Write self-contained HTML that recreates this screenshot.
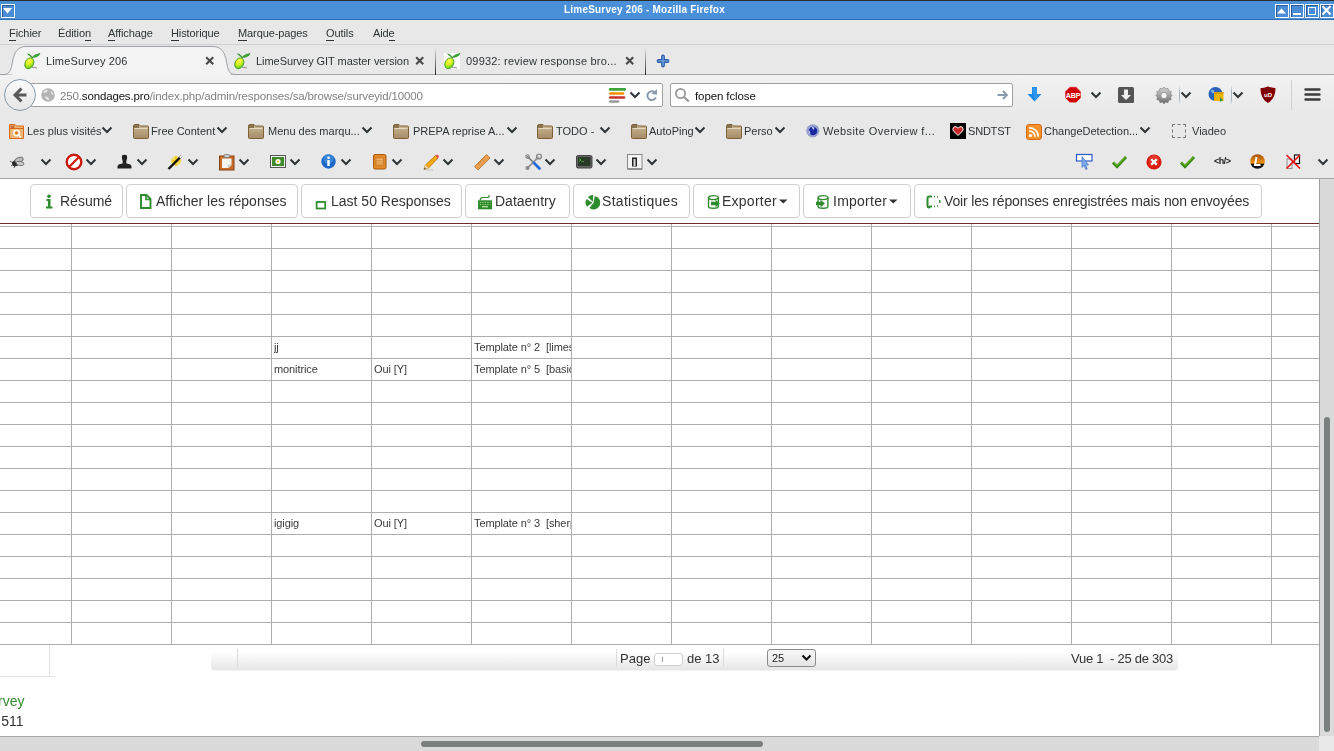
<!DOCTYPE html>
<html><head><meta charset="utf-8">
<style>
*{box-sizing:border-box}
html,body{margin:0;padding:0}
body{width:1334px;height:751px;overflow:hidden;position:relative;background:#e8e8e8;font-family:"Liberation Sans",sans-serif;color:#2e3436}
.a{position:absolute}
.t,.mi,.tab,.bm,.bt,.cell{will-change:transform}
.t{position:absolute;white-space:nowrap;line-height:1}
svg{position:absolute;overflow:visible}
.wb{position:absolute;top:3px;width:14px;height:14px;border:1px solid #fff;background:#4a8dd6;box-shadow:inset 1px 1px 0 #2a5a98}
.mi{position:absolute;top:28px;font-size:11px;letter-spacing:-0.1px;color:#2e3436;white-space:nowrap;line-height:1}
.mi u{text-decoration:none;position:relative}
.mi u:after{content:"";position:absolute;left:0;right:0;bottom:-2px;height:1px;background:#2e3436}
.tab{position:absolute;top:56px;font-size:11px;letter-spacing:-0.15px;color:#2e3436;white-space:nowrap;line-height:1}
.bm{position:absolute;top:126px;font-size:11px;letter-spacing:0px;color:#2e3436;white-space:nowrap;line-height:1}
.chev{position:absolute}
.btn{position:absolute;top:184px;height:34px;border:1px solid #cfcfcf;border-radius:4px;background:#fff}
.bt{position:absolute;top:194px;font-size:14px;color:#333;white-space:nowrap;line-height:1}
.hl{position:absolute;left:0;width:1319px;height:1px;background:#aeaeae}
.vl{position:absolute;top:224px;width:1px;height:421px;background:#aeaeae}
.cell{position:absolute;font-size:11px;letter-spacing:-0.1px;color:#3a3a3a;white-space:nowrap;line-height:1;overflow:hidden}
</style></head><body>

<!-- TITLE BAR -->
<div class="a" style="left:0;top:0;width:1334px;height:20px;background:#4a90d9;border-top:1px solid #2d2d2d;border-bottom:1px solid #2e6fb8">
  <div class="wb" style="left:1px;top:3px"><svg width="13" height="13" style="left:-1px;top:-1px"><path d="M2 4 H11 L6.5 9.5 Z" fill="#fff"/></svg></div>
  <div class="t" style="left:564px;top:4px;font-size:10px;letter-spacing:0.2px;font-weight:bold;color:#fff">LimeSurvey 206 - Mozilla Firefox</div>
  <div class="wb" style="left:1275px;top:3px"><svg width="13" height="13" style="left:-1px;top:-1px"><path d="M2 9.5 H11 L6.5 4.5 Z" fill="#fff"/></svg></div>
  <div class="wb" style="left:1290px;top:3px"><div class="a" style="left:2px;top:8px;width:8px;height:2px;background:#fff"></div></div>
  <div class="wb" style="left:1305px;top:3px"><div class="a" style="left:1.5px;top:1.5px;width:8px;height:8px;border:1.5px solid #fff"></div></div>
  <div class="wb" style="left:1320px;top:3px"><svg width="13" height="13" style="left:-1px;top:-1px"><path d="M2.5 2 L10.5 10.5 M10.5 2 L2.5 10.5" stroke="#fff" stroke-width="2"/></svg></div>
</div>

<!-- MENU BAR -->
<div class="a" style="left:0;top:20px;width:1334px;height:25px;border-bottom:1px solid #d0d0d0"></div>
<div class="mi" style="left:9px"><u>F</u>ichier</div>
<div class="mi" style="left:58px">Éditio<u>n</u></div>
<div class="mi" style="left:108px"><u>A</u>ffichage</div>
<div class="mi" style="left:171px"><u>H</u>istorique</div>
<div class="mi" style="left:238px"><u>M</u>arque-pages</div>
<div class="mi" style="left:326px"><u>O</u>utils</div>
<div class="mi" style="left:373px">Aid<u>e</u></div>

<!-- TABS -->
<div class="a" style="left:0;top:74px;width:1334px;height:1px;background:#a8a8a8"></div>
<svg width="240" height="32" style="left:0;top:45px">
  <path d="M0 29.5 L4 29.5 C9 29.5 11 26 12.5 17 C14 7 18 1.5 26 1.5 L213 1.5 C221 1.5 225 7 226.5 17 C228 26 230 29.5 235 29.5 L240 29.5" fill="#f3f3f3" stroke="#9aa0a6" stroke-width="1"/>
  <rect x="12" y="29" width="218" height="3" fill="#f3f3f3"/>
</svg>
<div class="a" style="left:435px;top:47px;width:1px;height:28px;background:linear-gradient(#e8e8e8,#222)"></div>
<div class="a" style="left:645px;top:47px;width:1px;height:28px;background:linear-gradient(#e8e8e8,#222)"></div>
<div class="tab" style="left:46px;letter-spacing:0.15px">LimeSurvey 206</div>
<div class="tab" style="left:256px;letter-spacing:-0.05px">LimeSurvey GIT master version</div>
<div class="tab" style="left:466px;letter-spacing:0.2px">09932: review response bro...</div>

<svg width="18" height="18" style="left:24px;top:52px">
<defs><radialGradient id="lm24" cx="0.35" cy="0.3" r="0.8"><stop offset="0" stop-color="#ffff50"/><stop offset="0.45" stop-color="#d8f020"/><stop offset="1" stop-color="#48c818"/></radialGradient></defs>
<path d="M8 15.5 Q11 15 13 16" stroke="#888" stroke-width="1.1" fill="none" opacity="0.8"/>
<ellipse cx="5.3" cy="11.3" rx="4.2" ry="5.7" transform="rotate(28 5.3 11.3)" fill="url(#lm24)" stroke="#2a8a10" stroke-width="0.7"/>
<path d="M8 5.5 C6.5 4.5 4.5 3 3.5 1.8 C5.5 2 7.5 3.5 8 5.5 Z" fill="#3ab030" stroke="#20801a" stroke-width="0.6"/>
<path d="M8 5.5 C10 3 13 2 16 1.5 C15 4 12 5.5 8 5.5 Z" fill="#3ab030" stroke="#20801a" stroke-width="0.6"/>
</svg>
<svg width="18" height="18" style="left:234px;top:52px">
<defs><radialGradient id="lm234" cx="0.35" cy="0.3" r="0.8"><stop offset="0" stop-color="#ffff50"/><stop offset="0.45" stop-color="#d8f020"/><stop offset="1" stop-color="#48c818"/></radialGradient></defs>
<path d="M8 15.5 Q11 15 13 16" stroke="#888" stroke-width="1.1" fill="none" opacity="0.8"/>
<ellipse cx="5.3" cy="11.3" rx="4.2" ry="5.7" transform="rotate(28 5.3 11.3)" fill="url(#lm234)" stroke="#2a8a10" stroke-width="0.7"/>
<path d="M8 5.5 C6.5 4.5 4.5 3 3.5 1.8 C5.5 2 7.5 3.5 8 5.5 Z" fill="#3ab030" stroke="#20801a" stroke-width="0.6"/>
<path d="M8 5.5 C10 3 13 2 16 1.5 C15 4 12 5.5 8 5.5 Z" fill="#3ab030" stroke="#20801a" stroke-width="0.6"/>
</svg>
<div class="a" style="left:444px;top:53px;width:16px;height:16px;background:#fff"></div><svg width="18" height="18" style="left:444px;top:52px">
<defs><radialGradient id="lm444" cx="0.35" cy="0.3" r="0.8"><stop offset="0" stop-color="#ffff50"/><stop offset="0.45" stop-color="#d8f020"/><stop offset="1" stop-color="#48c818"/></radialGradient></defs>
<path d="M8 15.5 Q11 15 13 16" stroke="#888" stroke-width="1.1" fill="none" opacity="0.8"/>
<ellipse cx="5.3" cy="11.3" rx="4.2" ry="5.7" transform="rotate(28 5.3 11.3)" fill="url(#lm444)" stroke="#2a8a10" stroke-width="0.7"/>
<path d="M8 5.5 C6.5 4.5 4.5 3 3.5 1.8 C5.5 2 7.5 3.5 8 5.5 Z" fill="#3ab030" stroke="#20801a" stroke-width="0.6"/>
<path d="M8 5.5 C10 3 13 2 16 1.5 C15 4 12 5.5 8 5.5 Z" fill="#3ab030" stroke="#20801a" stroke-width="0.6"/>
</svg>
<svg width="10" height="10" style="left:205px;top:56px"><path d="M1.2 1.2 L8.2 8.2 M8.2 1.2 L1.2 8.2" stroke="#4a4a4a" stroke-width="2.1"/></svg>
<svg width="10" height="10" style="left:415px;top:56px"><path d="M1.2 1.2 L8.2 8.2 M8.2 1.2 L1.2 8.2" stroke="#4a4a4a" stroke-width="2.1"/></svg>
<svg width="10" height="10" style="left:625px;top:56px"><path d="M1.2 1.2 L8.2 8.2 M8.2 1.2 L1.2 8.2" stroke="#4a4a4a" stroke-width="2.1"/></svg>
<svg width="14" height="14" style="left:657px;top:55px">
<path d="M6 1.5 V10.5 M1.5 6 H10.5" stroke="#2a5aa8" stroke-width="3.8" stroke-linecap="round"/>
<path d="M6 1.5 V10.5 M1.5 6 H10.5" stroke="#6a9ad8" stroke-width="1.6" stroke-linecap="round"/>
</svg>
<!-- NAV BAR -->
<div class="a" style="left:0;top:75px;width:1334px;height:40px;background:linear-gradient(#f2f2f2,#e8e8e8)"></div>
<div class="a" style="left:30px;top:83px;width:633px;height:24px;background:#fff;border:1px solid #a0a0a0;border-radius:2px"></div>
<div class="a" style="left:4px;top:79px;width:32px;height:32px;border-radius:50%;background:linear-gradient(#fafafa,#e6e6e6);border:1px solid #8a9aaa"></div>
<div class="t" style="left:60px;top:91px;font-size:11.5px;letter-spacing:-0.15px;color:#808080">250.<span style="color:#111">sondages.pro</span>/index.php/admin/responses/sa/browse/surveyid/10000</div>
<div class="a" style="left:670px;top:83px;width:343px;height:24px;background:#fff;border:1px solid #a0a0a0;border-radius:2px"></div>
<div class="t" style="left:695px;top:91px;font-size:11.5px;letter-spacing:-0.1px;color:#111">fopen fclose</div>


<!-- nav icons -->
<svg width="40" height="40" style="left:0;top:76px">
  <path d="M21.5 12.5 L15 19 L21.5 25.5 M15.5 19 L26.5 19" stroke="#5a5a5a" stroke-width="3" fill="none" stroke-linecap="butt" stroke-linejoin="miter"/>
</svg>
<svg width="16" height="16" style="left:41px;top:88px">
  <circle cx="7" cy="7" r="6.8" fill="#b4b4b4"/>
  <path d="M2.5 4 C4 2 6 1.5 7 2.5 C6 4 5 5 3 5 Z M9.5 3 C11 3.5 12.5 5 12.5 7 C11 7 10 5 9.5 3 Z M4 8.5 C6 8 8 9.5 8.5 12 C6.5 12.5 4.5 11 4 8.5 Z" fill="#e8e8e8"/>
</svg>
<svg width="20" height="20" style="left:607px;top:86px">
  <path d="M3.2 3.4 H17.8" stroke="#3ba53b" stroke-width="2.6" stroke-linecap="round"/>
  <path d="M3.2 7.5 H16" stroke="#f58e00" stroke-width="2.6" stroke-linecap="round"/>
  <path d="M3.2 11.5 H17" stroke="#c8302a" stroke-width="2.6" stroke-linecap="round"/>
  <path d="M3.2 15.5 H11" stroke="#999" stroke-width="2.6" stroke-linecap="round"/>
</svg>
<svg width="14" height="10" style="left:628px;top:90px">
  <path d="M2.5 2.5 L7 7 L11.5 2.5" stroke="#2e3436" stroke-width="2" fill="none"/>
</svg>
<svg width="16" height="16" style="left:644px;top:87px">
  <path d="M11.3 6 A4.4 4.4 0 1 0 11.8 10.5" stroke="#8a9aaa" stroke-width="2" fill="none"/>
  <path d="M13 2 L13 7.8 L7.5 7 Z" fill="#8a9aaa"/>
</svg>
<svg width="18" height="18" style="left:674px;top:86px">
  <circle cx="6.5" cy="7.5" r="4.6" stroke="#999" stroke-width="1.8" fill="none"/>
  <path d="M9.8 10.8 L14.8 15.5" stroke="#999" stroke-width="2.2"/>
</svg>
<svg width="14" height="14" style="left:996px;top:88px">
  <path d="M1.5 7 H11 M7 3 L11 7 L7 11" stroke="#8a9aaa" stroke-width="1.8" fill="none"/>
</svg>
<svg width="16" height="18" style="left:1027px;top:86px">
  <path d="M5 1 H10 V8 H14.5 L7.5 15.5 L0.5 8 H5 Z" fill="#1e88e5"/>
  <path d="M5.5 1.5 H9.5 V8.5 H13 L7.5 14.5 Z" fill="#42a5f5" opacity="0.5"/>
</svg>
<svg width="18" height="18" style="left:1065px;top:86px">
  <path d="M4.8 0.8 H11.2 L16 5.6 V12 L11.2 16.8 H4.8 L0 12 V5.6 Z" fill="#d40000" stroke="#f0f8f8" stroke-width="0.6"/>
  <text x="8" y="11.6" font-family="Liberation Sans" font-weight="bold" font-size="7.2" fill="#fff" text-anchor="middle" letter-spacing="-0.3">ABP</text>
</svg>
<svg width="14" height="10" style="left:1089px;top:90px">
  <path d="M2.5 2.5 L7 7 L11.5 2.5" stroke="#2e3436" stroke-width="2" fill="none"/>
</svg>
<svg width="18" height="18" style="left:1117px;top:86px">
  <rect x="1" y="1" width="16" height="16" rx="1.5" fill="#555"/>
  <path d="M7 3.5 H11 V9 H14 L9 14 L4 9 H7 Z" fill="#eee"/>
</svg>
<svg width="18" height="18" style="left:1155px;top:86px">
  <defs><linearGradient id="gg" x1="0" y1="0" x2="0" y2="1"><stop offset="0" stop-color="#d8d8d8"/><stop offset="1" stop-color="#6a6a6a"/></linearGradient></defs>
  <path d="M9 1 L10.5 3 L13 2.3 L13.7 4.8 L16.2 5.5 L15.5 8 L17.3 9.5 L15.5 11 L16.2 13.5 L13.7 14.2 L13 16.7 L10.5 16 L9 18 L7.5 16 L5 16.7 L4.3 14.2 L1.8 13.5 L2.5 11 L0.7 9.5 L2.5 8 L1.8 5.5 L4.3 4.8 L5 2.3 L7.5 3 Z" fill="url(#gg)" stroke="#666" stroke-width="0.5"/>
  <circle cx="9" cy="9.5" r="3.2" fill="#f4f4f4" stroke="#888" stroke-width="0.8"/>
</svg>
<div class="a" style="left:1179px;top:85px;width:1px;height:20px;background:linear-gradient(rgba(160,175,190,0),#a8b4c0 30%,#a8b4c0 70%,rgba(160,175,190,0))"></div>
<svg width="14" height="10" style="left:1179px;top:90px">
  <path d="M2.5 2.5 L7 7 L11.5 2.5" stroke="#2e3436" stroke-width="2" fill="none"/>
</svg>
<svg width="18" height="18" style="left:1208px;top:86px">
  <circle cx="7.5" cy="8" r="7" fill="#2a62b8"/>
  <path d="M3 4 C5 3 7 4 6 7 C4 8 3 6 3 4Z" fill="#7fb0e8"/>
  <rect x="6" y="6" width="9.5" height="9" fill="#f0b400"/>
  <rect x="6" y="6" width="9.5" height="2" fill="#d89a00"/>
  <path d="M12 11 L15 14 L12 16" fill="#3a9a3a"/>
</svg>
<div class="a" style="left:1231px;top:85px;width:1px;height:20px;background:linear-gradient(rgba(160,175,190,0),#a8b4c0 30%,#a8b4c0 70%,rgba(160,175,190,0))"></div>
<svg width="14" height="10" style="left:1231px;top:90px">
  <path d="M2.5 2.5 L7 7 L11.5 2.5" stroke="#2e3436" stroke-width="2" fill="none"/>
</svg>
<svg width="18" height="18" style="left:1260px;top:86px">
  <path d="M8 0.5 C11 1.5 13.5 2 15.5 2 C15.5 9 13 14 8 17 C3 14 0.5 9 0.5 2 C2.5 2 5 1.5 8 0.5Z" fill="#800000"/>
  <text x="8" y="11" font-family="Liberation Sans" font-weight="bold" font-size="6" fill="#fff" text-anchor="middle">uD</text>
</svg>
<div class="a" style="left:1291px;top:80px;width:1px;height:30px;background:#d0d0d0"></div>
<svg width="18" height="16" style="left:1304px;top:87px">
  <path d="M1.5 2.5 H15.5 M1.5 7.5 H15.5 M1.5 12.5 H15.5" stroke="#3c3c3c" stroke-width="2.4" stroke-linecap="round"/>
</svg>

<!-- BOOKMARKS -->
<div class="bm" style="left:27px">Les plus visités</div>
<div class="bm" style="left:151px">Free Content</div>
<div class="bm" style="left:268px">Menu des marqu...</div>
<div class="bm" style="left:413px">PREPA reprise A...</div>
<div class="bm" style="left:556px">TODO -</div>
<div class="bm" style="left:649px">AutoPing</div>
<div class="bm" style="left:744px">Perso</div>
<div class="bm" style="left:823px;letter-spacing:0.4px">Website Overview f...</div>
<div class="bm" style="left:968px;letter-spacing:-0.2px">SNDTST</div>
<div class="bm" style="left:1044px">ChangeDetection...</div>
<div class="bm" style="left:1192px">Viadeo</div>

<svg width="17" height="16" style="left:9px;top:124px">
<path d="M0.5 0.5 H6 L7.5 2 H14.5 V14.5 H0.5 Z" fill="#edb877" stroke="#dd6a12" stroke-width="1"/>
<rect x="1.5" y="1.5" width="4" height="2.5" fill="#c8733a"/>
<path d="M1 4.5 H14" stroke="#dd6a12" stroke-width="1"/>
<circle cx="7.5" cy="9" r="2.8" fill="none" stroke="#fff" stroke-width="1.3"/><circle cx="7.5" cy="9" r="1.2" fill="#dd6a12"/>
<path d="M9.5 11 L12 13.5" stroke="#fff" stroke-width="1.5"/></svg>
<svg width="14" height="10" style="left:100px;top:125px"><path d="M2.5 2.5 L7 7 L11.5 2.5" stroke="#2e3436" stroke-width="2" fill="none"/></svg>
<svg width="17" height="16" style="left:133px;top:124px"><defs><linearGradient id="fg133" x1="0" y1="0" x2="0" y2="1"><stop offset="0" stop-color="#cdb894"/><stop offset="1" stop-color="#a58c68"/></linearGradient></defs>
<path d="M0.5 2 Q0.5 0.5 2 0.5 H6 L7.5 2 H14.5 Q15.5 2 15.5 3 V13.5 Q15.5 14.5 14.5 14.5 H1.5 Q0.5 14.5 0.5 13.5 Z" fill="url(#fg133)" stroke="#7d6035" stroke-width="1"/>
<path d="M1.5 4.5 H14.5" stroke="#e6d8bc" stroke-width="1"/><rect x="1" y="1" width="5" height="3" fill="#8a7350"/></svg>
<svg width="14" height="10" style="left:215px;top:125px"><path d="M2.5 2.5 L7 7 L11.5 2.5" stroke="#2e3436" stroke-width="2" fill="none"/></svg>
<svg width="17" height="16" style="left:248px;top:124px"><defs><linearGradient id="fg248" x1="0" y1="0" x2="0" y2="1"><stop offset="0" stop-color="#cdb894"/><stop offset="1" stop-color="#a58c68"/></linearGradient></defs>
<path d="M0.5 2 Q0.5 0.5 2 0.5 H6 L7.5 2 H14.5 Q15.5 2 15.5 3 V13.5 Q15.5 14.5 14.5 14.5 H1.5 Q0.5 14.5 0.5 13.5 Z" fill="url(#fg248)" stroke="#7d6035" stroke-width="1"/>
<path d="M1.5 4.5 H14.5" stroke="#e6d8bc" stroke-width="1"/><rect x="1" y="1" width="5" height="3" fill="#8a7350"/></svg>
<svg width="14" height="10" style="left:360px;top:125px"><path d="M2.5 2.5 L7 7 L11.5 2.5" stroke="#2e3436" stroke-width="2" fill="none"/></svg>
<svg width="17" height="16" style="left:393px;top:124px"><defs><linearGradient id="fg393" x1="0" y1="0" x2="0" y2="1"><stop offset="0" stop-color="#cdb894"/><stop offset="1" stop-color="#a58c68"/></linearGradient></defs>
<path d="M0.5 2 Q0.5 0.5 2 0.5 H6 L7.5 2 H14.5 Q15.5 2 15.5 3 V13.5 Q15.5 14.5 14.5 14.5 H1.5 Q0.5 14.5 0.5 13.5 Z" fill="url(#fg393)" stroke="#7d6035" stroke-width="1"/>
<path d="M1.5 4.5 H14.5" stroke="#e6d8bc" stroke-width="1"/><rect x="1" y="1" width="5" height="3" fill="#8a7350"/></svg>
<svg width="14" height="10" style="left:505px;top:125px"><path d="M2.5 2.5 L7 7 L11.5 2.5" stroke="#2e3436" stroke-width="2" fill="none"/></svg>
<svg width="17" height="16" style="left:537px;top:124px"><defs><linearGradient id="fg537" x1="0" y1="0" x2="0" y2="1"><stop offset="0" stop-color="#cdb894"/><stop offset="1" stop-color="#a58c68"/></linearGradient></defs>
<path d="M0.5 2 Q0.5 0.5 2 0.5 H6 L7.5 2 H14.5 Q15.5 2 15.5 3 V13.5 Q15.5 14.5 14.5 14.5 H1.5 Q0.5 14.5 0.5 13.5 Z" fill="url(#fg537)" stroke="#7d6035" stroke-width="1"/>
<path d="M1.5 4.5 H14.5" stroke="#e6d8bc" stroke-width="1"/><rect x="1" y="1" width="5" height="3" fill="#8a7350"/></svg>
<svg width="14" height="10" style="left:598px;top:125px"><path d="M2.5 2.5 L7 7 L11.5 2.5" stroke="#2e3436" stroke-width="2" fill="none"/></svg>
<svg width="17" height="16" style="left:631px;top:124px"><defs><linearGradient id="fg631" x1="0" y1="0" x2="0" y2="1"><stop offset="0" stop-color="#cdb894"/><stop offset="1" stop-color="#a58c68"/></linearGradient></defs>
<path d="M0.5 2 Q0.5 0.5 2 0.5 H6 L7.5 2 H14.5 Q15.5 2 15.5 3 V13.5 Q15.5 14.5 14.5 14.5 H1.5 Q0.5 14.5 0.5 13.5 Z" fill="url(#fg631)" stroke="#7d6035" stroke-width="1"/>
<path d="M1.5 4.5 H14.5" stroke="#e6d8bc" stroke-width="1"/><rect x="1" y="1" width="5" height="3" fill="#8a7350"/></svg>
<svg width="14" height="10" style="left:693px;top:125px"><path d="M2.5 2.5 L7 7 L11.5 2.5" stroke="#2e3436" stroke-width="2" fill="none"/></svg>
<svg width="17" height="16" style="left:726px;top:124px"><defs><linearGradient id="fg726" x1="0" y1="0" x2="0" y2="1"><stop offset="0" stop-color="#cdb894"/><stop offset="1" stop-color="#a58c68"/></linearGradient></defs>
<path d="M0.5 2 Q0.5 0.5 2 0.5 H6 L7.5 2 H14.5 Q15.5 2 15.5 3 V13.5 Q15.5 14.5 14.5 14.5 H1.5 Q0.5 14.5 0.5 13.5 Z" fill="url(#fg726)" stroke="#7d6035" stroke-width="1"/>
<path d="M1.5 4.5 H14.5" stroke="#e6d8bc" stroke-width="1"/><rect x="1" y="1" width="5" height="3" fill="#8a7350"/></svg>
<svg width="14" height="10" style="left:773px;top:125px"><path d="M2.5 2.5 L7 7 L11.5 2.5" stroke="#2e3436" stroke-width="2" fill="none"/></svg>
<svg width="16" height="16" style="left:806px;top:124px">
<circle cx="6.8" cy="6.8" r="6.3" fill="#9aa0d8"/><circle cx="7" cy="7" r="4.3" fill="#1a2aa0"/><path d="M5.5 3 L8.5 3.5 L7.5 6 Z" fill="#d8dcf8"/><path d="M3 6 L4.5 9 L2.5 10 Z" fill="#c8d0f0"/>
<circle cx="6.8" cy="6.8" r="6.3" fill="none" stroke="#8a8aa0" stroke-width="0.8" stroke-dasharray="1 1"/></svg>
<svg width="17" height="17" style="left:950px;top:123px">
<rect x="0" y="0" width="16" height="16" fill="#000"/>
<path d="M8 12.5 L3.5 8 Q2.2 6.5 3.5 4.5 Q5 3 6.5 4 L8 5.2 L9.5 4 Q11 3 12.5 4.5 Q13.8 6.5 12.5 8 Z" fill="#c82828" stroke="#fff" stroke-width="1"/></svg>
<svg width="17" height="16" style="left:1026px;top:124px">
<rect x="0.5" y="0.5" width="15" height="15" rx="2.5" fill="#f5902a" stroke="#d86a10"/>
<circle cx="4.5" cy="11.5" r="1.6" fill="#fff"/>
<path d="M3.2 7.2 A5 5 0 0 1 8.8 12.8 M3.2 3.8 A8.5 8.5 0 0 1 12.2 12.8" stroke="#fff" stroke-width="1.7" fill="none"/></svg>
<svg width="14" height="10" style="left:1138px;top:125px"><path d="M2.5 2.5 L7 7 L11.5 2.5" stroke="#2e3436" stroke-width="2" fill="none"/></svg>
<div class="a" style="left:1172px;top:124px;width:14px;height:14px;border:1px dashed #777;border-radius:1px"></div>

<!-- ADDON BAR -->
<svg width="17" height="14" style="left:9px;top:155px">
<ellipse cx="7" cy="8" rx="4" ry="3" fill="#222" transform="rotate(-25 7 8)"/>
<ellipse cx="10" cy="5" rx="4.5" ry="2.5" fill="#bbb" stroke="#555" stroke-width="0.7" transform="rotate(-20 10 5)"/>
<ellipse cx="11" cy="8.5" rx="4" ry="2" fill="#ccc" stroke="#555" stroke-width="0.7" transform="rotate(10 11 8.5)"/>
<path d="M1 6 L4 8 M2 11 L5 9 M5 13 L6 10" stroke="#333" stroke-width="0.8"/></svg>
<svg width="14" height="10" style="left:39px;top:157px"><path d="M2.5 2.5 L7 7 L11.5 2.5" stroke="#2e3436" stroke-width="2" fill="none"/></svg>
<svg width="17" height="17" style="left:66px;top:154px">
<circle cx="8" cy="8" r="7.2" fill="#fff" stroke="#d8180c" stroke-width="2.2"/><path d="M3.3 12.7 L12.7 3.3" stroke="#d8180c" stroke-width="2.2"/>
<circle cx="8" cy="8" r="8" fill="none" stroke="#a81008" stroke-width="0.6"/></svg>
<svg width="14" height="10" style="left:84px;top:157px"><path d="M2.5 2.5 L7 7 L11.5 2.5" stroke="#2e3436" stroke-width="2" fill="none"/></svg>
<svg width="16" height="16" style="left:117px;top:154px">
<path d="M5 1.5 Q7.5 0 10 1.5 Q10.5 4.5 9.5 6.5 Q9 8.5 9.5 9.5 Q14.5 10 14.5 12.5 V14.5 H0.5 V12.5 Q0.5 10 5.5 9.5 Q6 8.5 5.5 6.5 Q4.5 4.5 5 1.5 Z" fill="#222"/></svg>
<svg width="14" height="10" style="left:135px;top:157px"><path d="M2.5 2.5 L7 7 L11.5 2.5" stroke="#2e3436" stroke-width="2" fill="none"/></svg>
<svg width="17" height="17" style="left:167px;top:154px">
<circle cx="9" cy="7" r="5" fill="#f6d830" opacity="0.7"/><path d="M9 1 L10 6 L15 7 L10 8 L9 13 L8 8 L3 7 L8 6 Z" fill="#f0c000"/>
<path d="M1.5 15 L14.5 2" stroke="#111" stroke-width="2.4"/><path d="M12.8 3.7 L14.5 2" stroke="#fff" stroke-width="2"/></svg>
<svg width="14" height="10" style="left:186px;top:157px"><path d="M2.5 2.5 L7 7 L11.5 2.5" stroke="#2e3436" stroke-width="2" fill="none"/></svg>
<svg width="16" height="17" style="left:219px;top:154px">
<rect x="0.5" y="2" width="14.5" height="14" fill="#c86a28" stroke="#8a4212" stroke-width="1"/>
<path d="M3 4.5 H12.5 V11 L9.5 14 H3 Z" fill="#f4f4f0"/><path d="M9.5 14 V11 H12.5" fill="#ddd" stroke="#aaa" stroke-width="0.5"/>
<rect x="5" y="0.5" width="5.5" height="3" rx="1" fill="#ccc" stroke="#777" stroke-width="0.8"/></svg>
<svg width="14" height="10" style="left:237px;top:157px"><path d="M2.5 2.5 L7 7 L11.5 2.5" stroke="#2e3436" stroke-width="2" fill="none"/></svg>
<svg width="17" height="14" style="left:270px;top:155px">
<rect x="0.5" y="0.5" width="15" height="12" fill="#f0f0f0" stroke="#555" stroke-width="1"/>
<rect x="2" y="2" width="12" height="9" fill="#3f8a2a"/><circle cx="8" cy="6.5" r="2.6" fill="#fff"/><circle cx="8" cy="6.5" r="1.1" fill="#f0c020"/></svg>
<svg width="14" height="10" style="left:288px;top:157px"><path d="M2.5 2.5 L7 7 L11.5 2.5" stroke="#2e3436" stroke-width="2" fill="none"/></svg>
<svg width="16" height="16" style="left:321px;top:154px">
<circle cx="7.5" cy="7.5" r="7.2" fill="#1b68c8"/><circle cx="7.5" cy="5" r="5" fill="#5aa0e8" opacity="0.5"/>
<rect x="6.3" y="6" width="2.4" height="6" fill="#fff"/><circle cx="7.5" cy="3.8" r="1.3" fill="#fff"/></svg>
<svg width="14" height="10" style="left:339px;top:157px"><path d="M2.5 2.5 L7 7 L11.5 2.5" stroke="#2e3436" stroke-width="2" fill="none"/></svg>
<svg width="14" height="16" style="left:373px;top:154px">
<rect x="0.5" y="0.5" width="12.5" height="14.5" rx="1.5" fill="#e08a2a" stroke="#a85a10" stroke-width="1"/>
<rect x="3" y="4" width="7.5" height="7" fill="#f0b060" stroke="#b86a20" stroke-width="0.6"/><path d="M3 6.5 H10.5 M3 8.8 H10.5" stroke="#c07830" stroke-width="0.5"/></svg>
<svg width="14" height="10" style="left:390px;top:157px"><path d="M2.5 2.5 L7 7 L11.5 2.5" stroke="#2e3436" stroke-width="2" fill="none"/></svg>
<svg width="17" height="17" style="left:423px;top:154px">
<path d="M1 15.5 L2.5 11 L12.5 1.5 L15 4 L5.5 14 Z" fill="#f5a810" stroke="#b8700a" stroke-width="0.8"/>
<path d="M12.5 1.5 L15 4 L16 3 Q16 1.5 14.5 0.5 Z" fill="#e84858"/><path d="M1 15.5 L2.5 11 L5.5 14 Z" fill="#f0d8a8"/><path d="M1 15.5 L1.8 13.5 L3 14.8 Z" fill="#333"/>
<path d="M3 16 H10" stroke="#999" stroke-width="0.8" opacity="0.6"/></svg>
<svg width="14" height="10" style="left:441px;top:157px"><path d="M2.5 2.5 L7 7 L11.5 2.5" stroke="#2e3436" stroke-width="2" fill="none"/></svg>
<svg width="17" height="17" style="left:474px;top:154px">
<path d="M0.5 12.5 L12.5 0.5 L16 4 L4 16 Z" fill="#e8a050" stroke="#b87028" stroke-width="0.8"/>
<path d="M4 9 L5.5 10.5 M6 7 L7 8 M8 5 L9.5 6.5 M10 3 L11 4" stroke="#a86a28" stroke-width="0.6"/></svg>
<svg width="14" height="10" style="left:492px;top:157px"><path d="M2.5 2.5 L7 7 L11.5 2.5" stroke="#2e3436" stroke-width="2" fill="none"/></svg>
<svg width="17" height="17" style="left:525px;top:154px">
<path d="M2 2 L14 14" stroke="#777" stroke-width="1.6"/><circle cx="2.5" cy="2.5" r="1.8" fill="none" stroke="#777" stroke-width="1"/>
<path d="M13.5 3 L3 13.5" stroke="#999" stroke-width="1.8"/><circle cx="14" cy="2.5" r="2.4" fill="none" stroke="#888" stroke-width="1.4"/><circle cx="2.5" cy="14" r="2" fill="#888"/>
<path d="M9 9 L14.5 14.5" stroke="#2a6ad8" stroke-width="2.8" stroke-linecap="round"/></svg>
<svg width="14" height="10" style="left:543px;top:157px"><path d="M2.5 2.5 L7 7 L11.5 2.5" stroke="#2e3436" stroke-width="2" fill="none"/></svg>
<svg width="17" height="14" style="left:576px;top:155px">
<rect x="0.5" y="0.5" width="15.5" height="12.5" rx="1.5" fill="#666" stroke="#444" stroke-width="1"/>
<rect x="2" y="2" width="12.5" height="9" fill="#2a3a28"/><path d="M3 3.5 L5 5 L3 6.5" stroke="#5ad830" stroke-width="0.8" fill="none"/><path d="M5.5 6.5 H8" stroke="#5ad830" stroke-width="0.6"/></svg>
<svg width="14" height="10" style="left:594px;top:157px"><path d="M2.5 2.5 L7 7 L11.5 2.5" stroke="#2e3436" stroke-width="2" fill="none"/></svg>
<svg width="16" height="16" style="left:627px;top:154px">
<rect x="0.5" y="0.5" width="14.5" height="14.5" fill="#f4f4f4" stroke="#888" stroke-width="1"/>
<rect x="5" y="3.5" width="5" height="9" fill="#222"/><rect x="6.5" y="5" width="2" height="7" fill="#ddd"/><path d="M1 15 H15" stroke="#666"/></svg>
<svg width="14" height="10" style="left:645px;top:157px"><path d="M2.5 2.5 L7 7 L11.5 2.5" stroke="#2e3436" stroke-width="2" fill="none"/></svg>
<svg width="17" height="17" style="left:1076px;top:154px">
<rect x="0.5" y="0.5" width="15.5" height="6.5" fill="#fff" stroke="#2a5ac8" stroke-width="1.2"/>
<path d="M6 2.5 L6 13.5 L8 11.5 L9.8 15.5 L11.3 14.8 L9.5 11 L12.5 11 Z" fill="#7aaae8" stroke="#3a70c8" stroke-width="0.7"/></svg>
<svg width="16" height="14" style="left:1112px;top:155px">
<path d="M1 7.5 L5 11.5 L14 2" stroke="#3a8a10" stroke-width="3" fill="none"/><path d="M1.5 7 L5 10.5 L13.5 1.8" stroke="#7ac830" stroke-width="1" fill="none"/></svg>
<svg width="17" height="17" style="left:1146px;top:154px">
<circle cx="8" cy="8" r="7.6" fill="#d81e10"/><circle cx="8" cy="6" r="5" fill="#f05040" opacity="0.5"/>
<path d="M5.2 5.2 L10.8 10.8 M10.8 5.2 L5.2 10.8" stroke="#fff" stroke-width="2.3"/></svg>
<svg width="16" height="14" style="left:1180px;top:155px">
<path d="M1 7.5 L5 11.5 L14 2" stroke="#3a8a10" stroke-width="3" fill="none"/><path d="M1.5 7 L5 10.5 L13.5 1.8" stroke="#7ac830" stroke-width="1" fill="none"/></svg>
<div class="t" style="left:1214px;top:157px;font-size:9px;font-weight:bold;color:#222;letter-spacing:-0.5px">&lt;h/&gt;</div>
<svg width="16" height="16" style="left:1250px;top:154px">
<defs><linearGradient id="lg1" x1="0" y1="0" x2="0" y2="1"><stop offset="0" stop-color="#a05010"/><stop offset="0.6" stop-color="#f09010"/><stop offset="0.7" stop-color="#111"/><stop offset="1" stop-color="#111"/></linearGradient></defs>
<circle cx="7.5" cy="7.5" r="7.3" fill="url(#lg1)"/><path d="M6.5 3 L5 11 H10.5" stroke="#fff" stroke-width="2" fill="none"/></svg>
<svg width="16" height="16" style="left:1286px;top:154px">
<rect x="1" y="5" width="5" height="9.5" fill="#eee" stroke="#777" stroke-width="0.8"/><rect x="8.5" y="1" width="5" height="8.5" fill="#fff" stroke="#111" stroke-width="1.2"/>
<path d="M0.5 1 L14 14.5 M14 1 L0.5 14.5" stroke="#f01010" stroke-width="1.6"/></svg>
<svg width="14" height="10" style="left:1316px;top:157px"><path d="M2.5 2.5 L7 7 L11.5 2.5" stroke="#2e3436" stroke-width="2" fill="none"/></svg>

<div class="a" style="left:0;top:178px;width:1334px;height:1px;background:#a4a4a4"></div>

<!-- CONTENT -->
<div class="a" style="left:0;top:179px;width:1319px;height:557px;background:#fff"></div>
<div class="btn" style="left:30px;width:93px"></div>
<div class="btn" style="left:126px;width:172px"></div>
<div class="btn" style="left:301px;width:161px"></div>
<div class="btn" style="left:465px;width:105px"></div>
<div class="btn" style="left:573px;width:117px"></div>
<div class="btn" style="left:693px;width:107px"></div>
<div class="btn" style="left:803px;width:108px"></div>
<div class="btn" style="left:914px;width:348px"></div>
<div class="bt" style="left:60px">Résumé</div>
<div class="bt" style="left:156px">Afficher les réponses</div>
<div class="bt" style="left:331px">Last 50 Responses</div>
<div class="bt" style="left:495px">Dataentry</div>
<div class="bt" style="left:602px;letter-spacing:0.3px">Statistiques</div>
<div class="bt" style="left:722px;letter-spacing:0.25px">Exporter</div>
<div class="bt" style="left:833px;letter-spacing:0.25px">Importer</div>
<div class="bt" style="left:944px;letter-spacing:-0.16px">Voir les réponses enregistrées mais non envoyées</div>
<!-- btn icons -->
<svg width="10" height="16" style="left:45px;top:194px">
  <circle cx="4" cy="2.3" r="1.8" fill="#2e8b2e"/><path d="M1.5 5 H5.5 V12.5 H7.5 V14.5 H1 V12.5 H3 V7 H1.5 Z" fill="#2e8b2e"/>
</svg>
<svg width="12" height="16" style="left:140px;top:194px">
  <path d="M1 1 H6.5 L10.5 5 V14 H1 Z" fill="none" stroke="#2e8b2e" stroke-width="1.9"/>
  <path d="M6 1 V5.5 H10.5" fill="none" stroke="#2e8b2e" stroke-width="1.6"/>
</svg>
<svg width="13" height="11" style="left:314px;top:199px">
  <rect x="2.6" y="3" width="8.6" height="6.5" fill="none" stroke="#2e8b2e" stroke-width="1.7"/>
  <path d="M3.5 2 V3.5 M5.8 2 V3.5 M8.1 2 V3.5 M10.4 2 V3.5" stroke="#2e8b2e" stroke-width="0.9"/>
</svg>
<svg width="16" height="16" style="left:477px;top:194px">
  <rect x="1" y="6.3" width="14" height="9" fill="#2e8b2e"/>
  <path d="M2.8 8.5 H13.5 M2.8 10.6 H13.5" stroke="#b8e090" stroke-width="0.9" stroke-dasharray="1.2 1.3"/>
  <path d="M5 12.8 H11" stroke="#e8f8d0" stroke-width="1"/>
  <path d="M3 6.3 Q3.5 3.5 6 3.5 H10.5 Q12.2 3.5 12.2 1" stroke="#2e8b2e" stroke-width="1.2" fill="none"/>
</svg>
<svg width="16" height="16" style="left:586px;top:195px">
  <path d="M7.57 7.72 L8.75 1.03 A6.8 6.8 0 1 1 3.39 13.08 Z M6.40 7.64 L0.97 11.73 A6.8 6.8 0 0 1 0.63 4.04 Z M6.95 6.77 L1.89 2.22 A6.8 6.8 0 0 1 7.19 -0.02 Z" fill="#2e8b2e"/>
</svg>
<svg width="16" height="16" style="left:706px;top:194px">
  <ellipse cx="7.4" cy="3.6" rx="4.9" ry="2" fill="none" stroke="#2e8b2e" stroke-width="1.4"/>
  <path d="M2.5 3.6 V12.5 Q2.5 14.3 7.4 14.3 Q12.3 14.3 12.3 12.5 V3.6" fill="none" stroke="#2e8b2e" stroke-width="1.4"/>
  <path d="M5 7.8 H9.5 V5.8 L14 9.5 L9.5 13.2 V11.2 H5 Z" fill="#2e8b2e"/>
</svg>
<svg width="16" height="16" style="left:814px;top:194px">
  <ellipse cx="9" cy="3.6" rx="4.9" ry="2" fill="none" stroke="#2e8b2e" stroke-width="1.4"/>
  <path d="M4.1 3.6 V12.5 Q4.1 14.3 9 14.3 Q13.9 14.3 13.9 12.5 V3.6" fill="none" stroke="#2e8b2e" stroke-width="1.4"/>
  <path d="M2 7.8 H6.5 V5.8 L11 9.5 L6.5 13.2 V11.2 H2 Z" fill="#2e8b2e"/>
</svg>
<svg width="18" height="16" style="left:925px;top:194px">
  <path d="M7 2.5 H4.5 Q2.5 2.5 2.5 4.5 V11.5 Q2.5 13.5 4 13.5 L5 12.5 H7" fill="none" stroke="#2e8b2e" stroke-width="2"/>
  <path d="M9 2.5 H10 M12 3 H13 M9 12.5 H10 M12 12 H13" stroke="#2e8b2e" stroke-width="1.6"/>
  <path d="M14.8 6 V9" stroke="#2e8b2e" stroke-width="1.4"/>
</svg>
<svg width="10" height="6" style="left:779px;top:199px"><path d="M0 0.5 H8.5 L4.25 4.5 Z" fill="#333"/></svg>
<svg width="10" height="6" style="left:889px;top:199px"><path d="M0 0.5 H8.5 L4.25 4.5 Z" fill="#333"/></svg>

<div class="a" style="left:0;top:223px;width:1319px;height:1px;background:#6f2d2d"></div>
<div class="hl" style="top:226px"></div><div class="hl" style="top:248px"></div><div class="hl" style="top:270px"></div><div class="hl" style="top:292px"></div><div class="hl" style="top:314px"></div><div class="hl" style="top:336px"></div><div class="hl" style="top:358px"></div><div class="hl" style="top:380px"></div><div class="hl" style="top:402px"></div><div class="hl" style="top:424px"></div><div class="hl" style="top:446px"></div><div class="hl" style="top:468px"></div><div class="hl" style="top:490px"></div><div class="hl" style="top:512px"></div><div class="hl" style="top:534px"></div><div class="hl" style="top:556px"></div><div class="hl" style="top:578px"></div><div class="hl" style="top:600px"></div><div class="hl" style="top:622px"></div><div class="hl" style="top:644px"></div>
<div class="vl" style="left:71px"></div><div class="vl" style="left:171px"></div><div class="vl" style="left:271px"></div><div class="vl" style="left:371px"></div><div class="vl" style="left:471px"></div><div class="vl" style="left:571px"></div><div class="vl" style="left:671px"></div><div class="vl" style="left:771px"></div><div class="vl" style="left:871px"></div><div class="vl" style="left:971px"></div><div class="vl" style="left:1071px"></div><div class="vl" style="left:1171px"></div><div class="vl" style="left:1271px"></div>
<div class="cell" style="left:274px;top:337px;width:96px;height:21px;padding-top:5px">jj</div>
<div class="cell" style="left:474px;top:337px;width:97px;height:21px;padding-top:5px">Template n° 2&nbsp; [limesurvey]</div>
<div class="cell" style="left:274px;top:359px;width:96px;height:21px;padding-top:5px">monitrice</div>
<div class="cell" style="left:374px;top:359px;width:96px;height:21px;padding-top:5px">Oui [Y]</div>
<div class="cell" style="left:474px;top:359px;width:97px;height:21px;padding-top:5px">Template n° 5&nbsp; [basic]</div>
<div class="cell" style="left:274px;top:513px;width:96px;height:21px;padding-top:5px">igigig</div>
<div class="cell" style="left:374px;top:513px;width:96px;height:21px;padding-top:5px">Oui [Y]</div>
<div class="cell" style="left:474px;top:513px;width:97px;height:21px;padding-top:5px">Template n° 3&nbsp; [sherpa]</div>

<!-- left light box & pager -->
<div class="a" style="left:0;top:645px;width:50px;height:32px;border-right:1px solid #e3e3e3;border-bottom:1px solid #e3e3e3"></div>
<div class="a" style="left:50px;top:676px;width:5px;height:1px;background:#e3e3e3"></div>
<div class="a" style="left:211px;top:645px;width:967px;height:25px;border-radius:0 0 4px 4px;background:linear-gradient(#fff 0px,#fff 7px,#e6e6e6 25px);box-shadow:0 1px 1px rgba(0,0,0,0.05)"></div>
<div class="a" style="left:237px;top:649px;width:1px;height:18px;background:#dcdcdc"></div>
<div class="a" style="left:616px;top:649px;width:1px;height:18px;background:#dcdcdc"></div>
<div class="a" style="left:723px;top:649px;width:1px;height:18px;background:#dcdcdc"></div>
<div class="t" style="left:620px;top:652px;font-size:13px;color:#333">Page</div>
<div class="a" style="left:654px;top:653px;width:29px;height:13px;border:1px solid #cfcfcf;border-radius:3px;background:#fff"></div>
<div class="a" style="left:662px;top:657px;width:1px;height:5px;background:#999"></div>
<div class="t" style="left:687px;top:652px;font-size:13px;color:#333">de 13</div>
<div class="a" style="left:767px;top:649px;width:49px;height:18px;border:1px solid #8a8a8a;border-radius:3px;background:linear-gradient(#f8f8f8,#e4e4e4)"></div>
<div class="t" style="left:772px;top:653px;font-size:11px;color:#222">25</div>
<svg width="12" height="8" style="left:801px;top:654px"><path d="M1.5 1.5 L5.5 5.5 L9.5 1.5" stroke="#111" stroke-width="2" fill="none"/></svg>
<div class="t" style="left:1071px;top:652px;font-size:13px;color:#333;letter-spacing:-0.25px">Vue 1&nbsp; - 25 de 303</div>

<div class="t" style="left:-2px;top:694px;font-size:14px;color:#328a32">rvey</div>
<div class="t" style="left:0px;top:714px;font-size:14px;color:#333">&#8202;511</div>

<!-- SCROLLBARS -->
<div class="a" style="left:1319px;top:179px;width:15px;height:557px;background:#dadada;border-left:1px solid #a0a0a0"></div>
<div class="a" style="left:1324px;top:417px;width:6px;height:315px;border-radius:3px;background:#7a7f80"></div>
<div class="a" style="left:0;top:736px;width:1319px;height:15px;background:#dadada;border-top:1px solid #a8a8a8"></div>
<div class="a" style="left:1319px;top:736px;width:15px;height:15px;background:#e8e8e8"></div>
<div class="a" style="left:421px;top:741px;width:342px;height:6px;border-radius:3px;background:#7a7f80"></div>

</body></html>
